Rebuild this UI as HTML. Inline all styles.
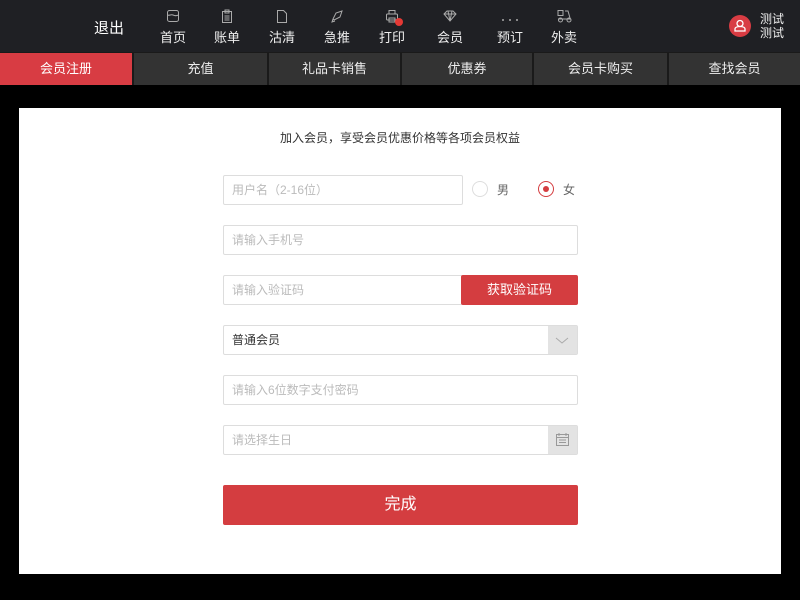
<!DOCTYPE html>
<html><head><meta charset="utf-8"><style>
*{margin:0;padding:0;box-sizing:border-box}
body{width:800px;height:600px;background:#000;font-family:"Liberation Sans","Noto Sans CJK SC",sans-serif;position:relative;overflow:hidden}
.hdr{position:absolute;left:0;top:0;width:800px;height:52px;background:#1f2024}
.exit{position:absolute;left:94px;top:17px;color:#fff;font-size:15px}
.nav{position:absolute;top:0;width:50px;text-align:center;color:#eee;font-size:13px}
.nav svg{position:absolute;left:18px;top:9px}
.nav span{position:absolute;left:0;width:50px;top:27px}
.user{position:absolute;left:729px;top:15px;width:22px;height:22px;border-radius:50%;background:#d83c43}
.uname{position:absolute;left:760px;top:12px;color:#eee;font-size:12px;line-height:14px}
.tabs{position:absolute;top:52px;left:0;width:800px;height:33px;background:#1a1a1a}
.tab{position:absolute;top:1px;height:32px;background:#333;color:#eee;font-size:13px;text-align:center;line-height:32px}
.tab.a{background:#d83c43;color:#fff}
.card{position:absolute;left:19px;top:108px;width:762px;height:466px;background:#fff}
.t{position:absolute;left:0;width:762px;top:21px;text-align:center;font-size:12px;color:#333}
.in{position:absolute;left:204px;width:355px;height:30px;border:1px solid #ddd;border-radius:2px;font-size:12px;color:#bbb;line-height:28px;padding-left:8px}
.btn{position:absolute;background:#d43d40;color:#fff;text-align:center;border-radius:2px}
.rad{position:absolute;width:16px;height:16px;border:1px solid #ddd;border-radius:50%}
.side{position:absolute;right:0;top:0;width:29px;height:28px;background:#e3e3e3}
</style></head><body>
<div class="hdr">
<div class="exit">退出</div>
<div class="nav" style="left:148px"><svg width="14" height="14" viewBox="0 0 14 14" fill="none" stroke="#aaa"><rect x="1.5" y="1.5" width="11" height="11" rx="2"/><path d="M1.5 6c2 1 3.5-1 5.5 0s3.5 1 5.5 0"/></svg><span>首页</span></div>
<div class="nav" style="left:202px"><svg width="14" height="14" viewBox="0 0 14 14" fill="none" stroke="#aaa"><rect x="2.5" y="2.5" width="9" height="11"/><rect x="5" y="1" width="4" height="3"/><path d="M4.5 7h5M4.5 9h5M4.5 11h5"/></svg><span>账单</span></div>
<div class="nav" style="left:257px"><svg width="14" height="14" viewBox="0 0 14 14" fill="none" stroke="#aaa"><path d="M2.5 1.5h6l3 3v9h-9z"/></svg><span>沽清</span></div>
<div class="nav" style="left:312px"><svg width="14" height="14" viewBox="0 0 14 14" fill="none" stroke="#aaa"><path d="M12 2L6 4 3 10l1 1 6-3zM3 10l-1 3 3-1"/></svg><span>急推</span></div>
<div class="nav" style="left:367px"><svg width="14" height="14" viewBox="0 0 14 14" fill="none" stroke="#aaa"><rect x="1.5" y="5" width="11" height="6" rx="1"/><rect x="4" y="1.5" width="6" height="3.5"/><rect x="4" y="9" width="6" height="4"/></svg><div style="position:absolute;left:28px;top:18px;width:8px;height:8px;border-radius:50%;background:#e53935"></div><span>打印</span></div>
<div class="nav" style="left:425px"><svg width="14" height="14" viewBox="0 0 14 14" fill="none" stroke="#aaa"><path d="M1 5l3-3h6l3 3-6 7zM1 5h12M5 2L7 12 9 2"/></svg><span>会员</span></div>
<div class="nav" style="left:485px"><svg width="20" height="14" viewBox="0 0 20 14" style="left:15px"><circle cx="3" cy="11" r="1" fill="#aaa"/><circle cx="10" cy="11" r="1" fill="#aaa"/><circle cx="17" cy="11" r="1" fill="#aaa"/></svg><span>预订</span></div>
<div class="nav" style="left:539px"><svg width="16" height="14" viewBox="0 0 16 14" fill="none" stroke="#aaa"><rect x="1" y="1.5" width="5" height="5"/><path d="M8 2h3l2 7M1 10h13"/><circle cx="3.5" cy="11" r="2"/><circle cx="12" cy="11" r="2"/></svg><span>外卖</span></div>
<div class="user"><svg width="22" height="22" viewBox="0 0 22 22" fill="none" stroke="#fff" stroke-width="1.3"><circle cx="11" cy="8.5" r="3"/><path d="M6 16v-2c0-1.5 2-2.5 5-2.5s5 1 5 2.5v2z"/></svg></div>
<div class="uname">测试<br>测试</div>
</div>
<div class="tabs">
<div class="tab a" style="left:0;width:132px">会员注册</div>
<div class="tab" style="left:134px;width:133px">充值</div>
<div class="tab" style="left:269px;width:131px">礼品卡销售</div>
<div class="tab" style="left:402px;width:130px">优惠券</div>
<div class="tab" style="left:534px;width:133px">会员卡购买</div>
<div class="tab" style="left:669px;width:131px">查找会员</div>
</div>
<div class="card">
<div class="t">加入会员，享受会员优惠价格等各项会员权益</div>
<div class="in" style="top:67px;width:240px">用户名（2-16位）</div>
<div class="rad" style="left:453px;top:73px"></div><div style="position:absolute;left:478px;top:73px;font-size:12px;color:#666">男</div>
<div class="rad" style="left:519px;top:73px;border-color:#d43d40"><div style="position:absolute;left:4px;top:4px;width:6px;height:6px;border-radius:50%;background:#d43d40"></div></div><div style="position:absolute;left:544px;top:73px;font-size:12px;color:#666">女</div>
<div class="in" style="top:117px">请输入手机号</div>
<div class="in" style="top:167px;width:240px">请输入验证码</div>
<div class="btn" style="left:442px;top:167px;width:117px;height:30px;line-height:30px;font-size:13px">获取验证码</div>
<div class="in" style="top:217px;color:#333">普通会员<div class="side"><svg width="29" height="28" fill="none" stroke="#aaa"><path d="M8 12l6 5 6-5"/></svg></div></div>
<div class="in" style="top:267px">请输入6位数字支付密码</div>
<div class="in" style="top:317px">请选择生日<div class="side"><svg width="29" height="28" fill="none" stroke="#999"><rect x="8.5" y="8.5" width="12" height="11"/><path d="M8.5 11.5h12M11 7v3M18 7v3M11 14h7M11 16.5h7"/></svg></div></div>
<div class="btn" style="left:204px;top:377px;width:355px;height:40px;line-height:40px;font-size:16px">完成</div>
</div>
</body></html>
